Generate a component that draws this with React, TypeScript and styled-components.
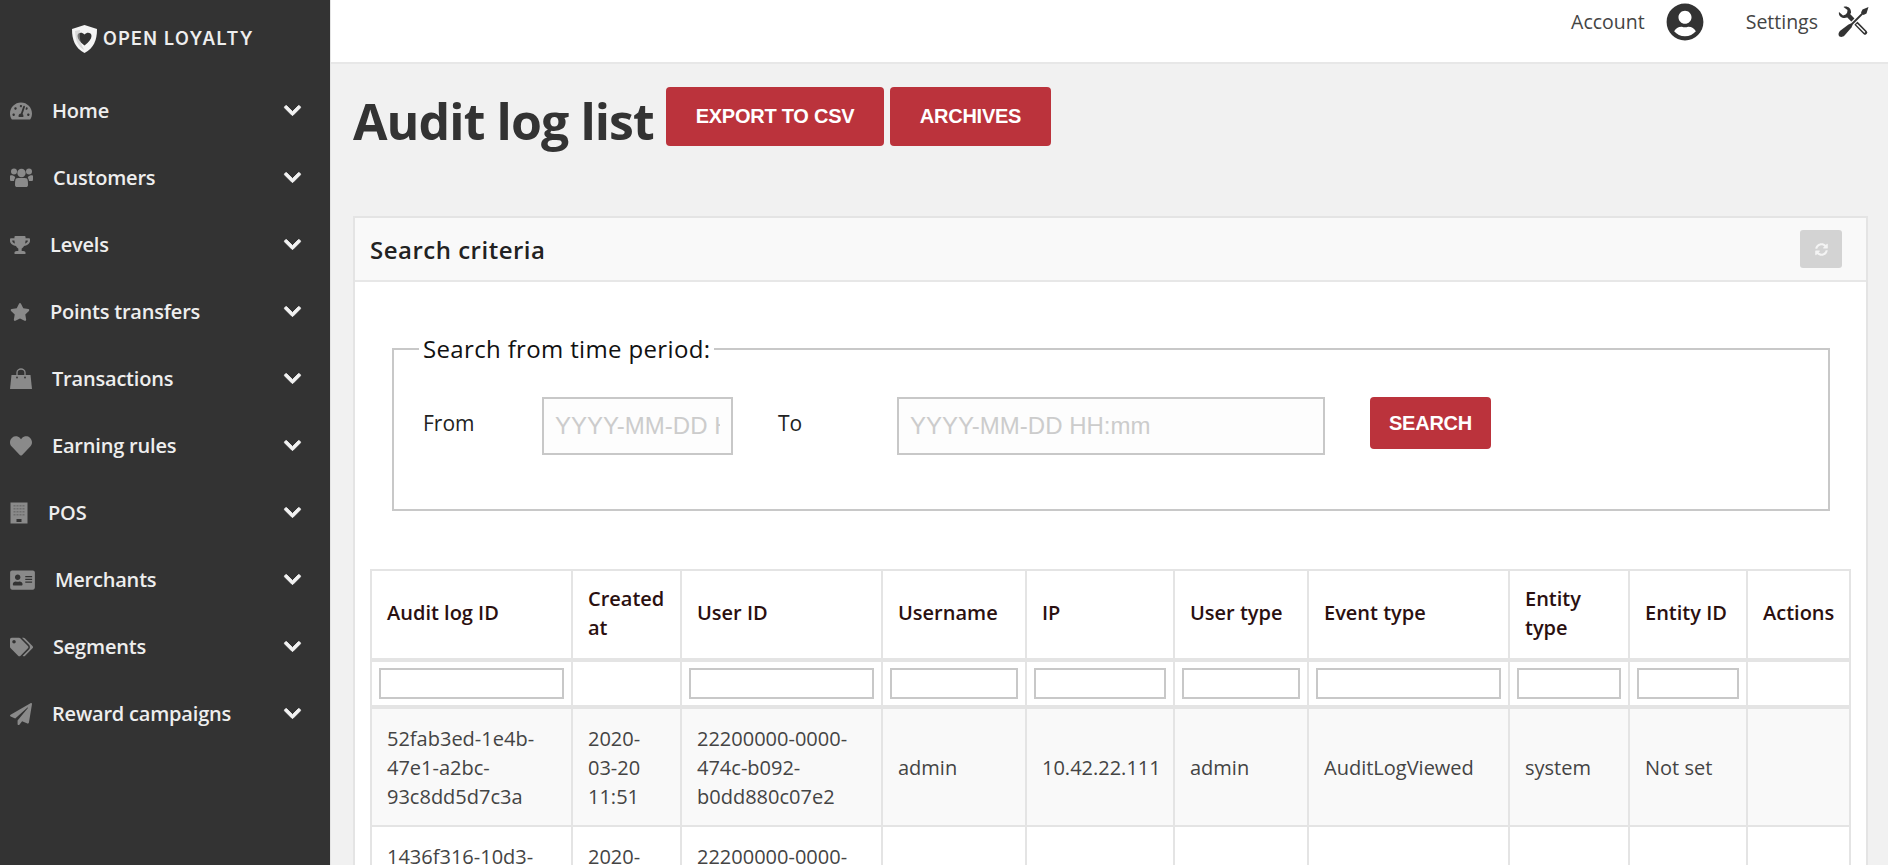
import React from "react";
import styled, { createGlobalStyle } from "styled-components";
import {
  FaAddressCard,
  FaChevronDown,
  FaHeart,
  FaPaperPlane,
  FaStar,
  FaSyncAlt,
  FaTachometerAlt,
  FaTags,
  FaTrophy,
  FaUserCircle,
} from "react-icons/fa";

const GlobalStyle = createGlobalStyle`
  html, body {
    margin: 0;
    padding: 0;
    height: 100%;
    overflow: hidden;
  }
  body {
    font-family: "Open Sans", "Liberation Sans", sans-serif;
    background: #f1f1f1;
    color: #444;
  }
  * { box-sizing: border-box; }
`;

const Page = styled.div`
  display: flex;
  height: 865px;
  overflow: hidden;
`;

const Sidebar = styled.aside`
  width: 331px;
  flex: none;
  background: #333;
  border-right: 1px solid #e4e4e4;
`;

const Logo = styled.div`
  height: 77px;
  display: flex;
  align-items: center;
  gap: 6px;
  padding-left: 72px;
  svg { width: 25px; height: 28px; flex: none; }
  span {
    font-family: Inter, "Open Sans", sans-serif;
    font-weight: 600;
    font-size: 18px;
    letter-spacing: 1.3px;
    color: #eee;
    white-space: nowrap;
  }
`;

const NavList = styled.ul`
  list-style: none;
  margin: 0;
  padding: 0;
`;

const NavItem = styled.li`
  height: 67px;
  display: flex;
  align-items: center;
  padding: 0 28px 0 10px;
  color: #eee;
  font-size: 20px;
  font-weight: 600;
  letter-spacing: -0.2px;
`;

const NavIcon = styled.span<{ $w: number }>`
  width: ${(p) => p.$w}px;
  height: 22px;
  margin-right: 20px;
  flex: none;
  color: #8a8a8a;
  svg { width: 100%; height: 100%; display: block; }
`;

const NavLabel = styled.span`
  flex: 1;
`;

const Chevron = styled(FaChevronDown)`
  width: 19px;
  height: 19px;
  color: #f2f2f2;
  stroke: currentColor;
  stroke-width: 24;
`;

const Main = styled.main`
  flex: 1;
  min-width: 0;
`;

const TopBar = styled.header`
  height: 64px;
  background: #fff;
  border-bottom: 2px solid #e7e7e7;
  display: flex;
  align-items: flex-start;
  justify-content: flex-end;
  padding: 3px 18px 0 0;
  font-size: 19.5px;
`;

const TopLink = styled.div<{ $gap: number }>`
  display: flex;
  align-items: center;
  gap: ${(p) => p.$gap}px;
  height: 38px;
  margin-left: 42px;
  color: #444;
  span { position: relative; top: -1px; }
  svg { color: #333; flex: none; }
`;

const Content = styled.div`
  padding: 23px 20px 0 22px;
`;

const TitleRow = styled.div`
  display: flex;
  align-items: flex-start;
  height: 129px;
`;

const Title = styled.h1`
  margin: 0;
  width: 313px;
  font-size: 50px;
  line-height: 68px;
  font-weight: 700;
  letter-spacing: -0.9px;
  color: #333;
  white-space: nowrap;
`;

const RedButton = styled.button<{ $w: number; $h?: number }>`
  background: #bb333c;
  border: none;
  border-radius: 4px;
  color: #fff;
  font-family: "Liberation Sans", Arial, sans-serif;
  font-weight: 700;
  font-size: 20px;
  letter-spacing: -0.25px;
  text-transform: uppercase;
  padding: 0;
  height: ${(p) => p.$h ?? 59}px;
  width: ${(p) => p.$w}px;
  margin-right: 6px;
`;

const Panel = styled.section`
  background: #fff;
  border: 2px solid #e4e4e4;
  border-bottom: none;
  height: 700px;
`;

const PanelHead = styled.div`
  height: 64px;
  background: #f9f9f9;
  border-bottom: 2px solid #e7e7e7;
  display: flex;
  align-items: center;
  justify-content: space-between;
  padding: 0 24px 0 15px;
`;

const PanelTitle = styled.h2`
  margin: 0;
  font-size: 24px;
  font-weight: 600;
  letter-spacing: 0.5px;
  color: #222;
`;

const RefreshButton = styled.button`
  width: 42px;
  height: 38px;
  border: none;
  border-radius: 3px;
  background: #d3d3d3;
  color: #f4f4f4;
  display: flex;
  align-items: center;
  justify-content: center;
  padding: 0;
  svg { width: 13px; height: 13px; }
`;

const PanelBody = styled.div`
  padding: 50px 0 0 15px;
`;

const Field = styled.fieldset`
  margin: 0 36px 0 22px;
  width: 1438px;
  height: 179px;
  padding: 0 0 0 29px;
  border: 2px solid #c8c8c8;
  legend {
    padding: 0 4px;
    margin-left: -4px;
    font-size: 24px;
    letter-spacing: 0.35px;
    color: #111;
    line-height: 34px;
  }
`;

const FieldRow = styled.div`
  display: flex;
  align-items: flex-start;
  margin-top: 31px;
`;

const FieldLabel = styled.label<{ $w: number }>`
  width: ${(p) => p.$w}px;
  height: 52px;
  display: flex;
  align-items: center;
  font-size: 21px;
  color: #222;
`;

const DateInput = styled.input<{ $w: number }>`
  width: ${(p) => p.$w}px;
  height: 58px;
  border: 2px solid #c8c8c8;
  background: #fdfdfd;
  padding: 0 11px;
  font-family: "Liberation Sans", Arial, sans-serif;
  font-size: 24px;
  margin-right: 45px;
  &::placeholder { color: #ccc; opacity: 1; }
`;

const LogTable = styled.table`
  margin-top: 58px;
  table-layout: fixed;
  width: 1479px;
  border-collapse: collapse;
  font-size: 20px;
  line-height: 29px;
  color: #444;
  th, td {
    border: 2px solid #e4e4e4;
    padding: 14.5px 15px;
    text-align: left;
  }
  th {
    height: 88px;
    padding-top: 12.5px;
    padding-bottom: 16.5px;
    font-weight: 600;
    color: #2b1010;
  }
  thead tr:first-child th { border-bottom-width: 4px; }
`;

const FilterCell = styled.td`
  && { padding: 6px 7px; height: 46px; border-bottom-width: 4px; }
`;

const FilterInput = styled.input`
  width: 100%;
  height: 31px;
  display: block;
  border: 2px solid #c8c8c8;
  background: #fff;
  padding: 0 6px;
`;

const DataRow = styled.tr`
  background: #f9f9f9;
  td { height: 116px; vertical-align: middle; }
`;

const NextRow = styled.tr`
  td { vertical-align: top; }
`;

function ShieldLogo() {
  return (
    <svg viewBox="0 0 25 28" aria-hidden="true">
      <path fill="#f4f4f4" d="M12.5 0 L25 4 C25 15 22 23 12.5 28 C3 23 0 15 0 4 Z" />
      <path fill="#333" d="M12.5 20.5 C8 17 5.5 14 5.5 11 C5.5 8 9.5 6.5 12.5 9.5 C15.5 6.5 19.5 8 19.5 11 C19.5 14 17 17 12.5 20.5 Z" />
      <path fill="#bdbdbd" d="M3 6 L8 5 C7 14 9 20 12.5 25 C6 22 3.5 15 3 6 Z" opacity="0.5" />
    </svg>
  );
}

// wrench under screwdriver, like the header icon
function ToolsIcon() {
  return (
    <svg width="32" height="32" viewBox="0 0 32 32" aria-hidden="true">
      <path fill="#333" d="M1 6 L5 9.5 L9 8 L9.5 4 L5.5 1 C9 -0.5 13.5 2 13 7 L9 11.5 C5 13 0 10.5 1 6 Z" />
      <line x1="10" y1="9" x2="27" y2="26.5" stroke="#333" strokeWidth="4.5" strokeLinecap="round" />
      <line x1="19" y1="18.5" x2="26.5" y2="26" stroke="#fff" strokeWidth="1.4" strokeLinecap="round" />
      <line x1="25" y1="7" x2="14" y2="18" stroke="#fff" strokeWidth="4.5" />
      <line x1="25" y1="7" x2="12" y2="20" stroke="#333" strokeWidth="1.8" />
      <path fill="#333" d="M30.5 1 L28.5 7.5 L25.5 9 L23 6.5 L24.5 3.5 Z" />
      <path fill="#333" d="M13 17.5 L14.5 19 L13.5 21.5 L6.5 29.5 C4.5 31.5 1.8 31 1 30 C0 28.5 0.5 26 2.5 24.5 L10.5 18.5 Z" />
    </svg>
  );
}

function UsersIcon() {
  return (
    <svg viewBox="0 0 23 22" fill="currentColor" aria-hidden="true">
      <circle cx="4" cy="4.5" r="3" />
      <circle cx="19" cy="4.5" r="3" />
      <circle cx="11.5" cy="6" r="4.2" />
      <path d="M0 9 C0 8 1.5 8 3 8.5 C5 9.5 5.5 10 5 11 C4.5 12 4 13 4 14 L1 14 C0 14 0 13 0 12 Z" />
      <path d="M23 9 C23 8 21.5 8 20 8.5 C18 9.5 17.5 10 18 11 C18.5 12 19 13 19 14 L22 14 C23 14 23 13 23 12 Z" />
      <path d="M6 11.5 C7 10.5 9 11 11.5 11 C14 11 16 10.5 17 11.5 C18 12.5 18 16 18 18 C18 19.5 17 20 16 20 L7 20 C6 20 5 19.5 5 18 C5 16 5 12.5 6 11.5 Z" />
    </svg>
  );
}

function BagIcon() {
  return (
    <svg viewBox="0 0 22 22" fill="currentColor" aria-hidden="true">
      <path d="M1.5 7 L20.5 7 L22 21 L0 21 Z" />
      <path fill="none" stroke="currentColor" strokeWidth="1.3" d="M7 9 L7 4.5 C7 2.5 9 1 11 1 C13 1 15 2.5 15 4.5 L15 9" />
      <circle cx="7" cy="9.5" r="0.9" fill="#333" />
      <circle cx="15" cy="9.5" r="0.9" fill="#333" />
    </svg>
  );
}

function BuildingIcon() {
  const rows = [3, 6, 9, 12];
  const cols = [3, 6, 9, 12];
  return (
    <svg viewBox="0 0 17 22" aria-hidden="true">
      <rect width="17" height="21" y="0.5" fill="currentColor" />
      {rows.map((y) =>
        cols.map((x) => <rect key={`${x}-${y}`} x={x} y={y} width="2" height="1.5" fill="#6e6e6e" />)
      )}
      <rect x="6" y="17" width="5" height="3" fill="#333" />
    </svg>
  );
}

const navItems = [
  { label: "Home", icon: FaTachometerAlt, w: 22 },
  { label: "Customers", icon: UsersIcon, w: 23 },
  { label: "Levels", icon: FaTrophy, w: 20 },
  { label: "Points transfers", icon: FaStar, w: 20 },
  { label: "Transactions", icon: BagIcon, w: 22 },
  { label: "Earning rules", icon: FaHeart, w: 22 },
  { label: "POS", icon: BuildingIcon, w: 18 },
  { label: "Merchants", icon: FaAddressCard, w: 25 },
  { label: "Segments", icon: FaTags, w: 23 },
  { label: "Reward campaigns", icon: FaPaperPlane, w: 22 },
];

const colWidths = [201, 109, 201, 144, 148, 134, 201, 120, 118, 103];
const headers = ["Audit log ID", "Created at", "User ID", "Username", "IP", "User type", "Event type", "Entity type", "Entity ID", "Actions"];
const filters = [true, false, true, true, true, true, true, true, true, false];

export default function App() {
  return (
    <>
      <GlobalStyle />
      <Page>
        <Sidebar>
          <Logo>
            <ShieldLogo />
            <span>OPEN LOYALTY</span>
          </Logo>
          <NavList>
            {navItems.map((item) => (
              <NavItem key={item.label}>
                <NavIcon $w={item.w}>
                  <item.icon />
                </NavIcon>
                <NavLabel>{item.label}</NavLabel>
                <Chevron />
              </NavItem>
            ))}
          </NavList>
        </Sidebar>
        <Main>
          <TopBar>
            <TopLink $gap={21}>
              <span>Account</span>
              <FaUserCircle size={38} />
            </TopLink>
            <TopLink $gap={20}>
              <span>Settings</span>
              <ToolsIcon />
            </TopLink>
          </TopBar>
          <Content>
            <TitleRow>
              <Title>Audit log list</Title>
              <RedButton $w={218}>Export to CSV</RedButton>
              <RedButton $w={161}>Archives</RedButton>
            </TitleRow>
            <Panel>
              <PanelHead>
                <PanelTitle>Search criteria</PanelTitle>
                <RefreshButton>
                  <FaSyncAlt />
                </RefreshButton>
              </PanelHead>
              <PanelBody>
                <Field>
                  <legend>Search from time period:</legend>
                  <FieldRow>
                    <FieldLabel $w={119}>From</FieldLabel>
                    <DateInput $w={191} placeholder="YYYY-MM-DD HH:mm" />
                    <FieldLabel $w={119}>To</FieldLabel>
                    <DateInput $w={428} placeholder="YYYY-MM-DD HH:mm" />
                    <RedButton $w={121} $h={52}>Search</RedButton>
                  </FieldRow>
                </Field>
                <LogTable>
                  <colgroup>
                    {colWidths.map((w, i) => (
                      <col key={i} width={w} />
                    ))}
                  </colgroup>
                  <thead>
                    <tr>
                      {headers.map((h) => (
                        <th key={h}>{h}</th>
                      ))}
                    </tr>
                    <tr>
                      {filters.map((f, i) => (
                        <FilterCell key={i}>
                          {f && <FilterInput type="text" />}
                        </FilterCell>
                      ))}
                    </tr>
                  </thead>
                  <tbody>
                    <DataRow>
                      <td>52fab3ed-1e4b-47e1-a2bc-93c8dd5d7c3a</td>
                      <td>2020-03-20 11:51</td>
                      <td>22200000-0000-474c-b092-b0dd880c07e2</td>
                      <td>admin</td>
                      <td>10.42.22.111</td>
                      <td>admin</td>
                      <td>AuditLogViewed</td>
                      <td>system</td>
                      <td>Not set</td>
                      <td></td>
                    </DataRow>
                    <NextRow>
                      <td>1436f316-10d3-</td>
                      <td>2020-</td>
                      <td>22200000-0000-</td>
                      <td></td>
                      <td></td>
                      <td></td>
                      <td></td>
                      <td></td>
                      <td></td>
                      <td></td>
                    </NextRow>
                  </tbody>
                </LogTable>
              </PanelBody>
            </Panel>
          </Content>
        </Main>
      </Page>
    </>
  );
}
